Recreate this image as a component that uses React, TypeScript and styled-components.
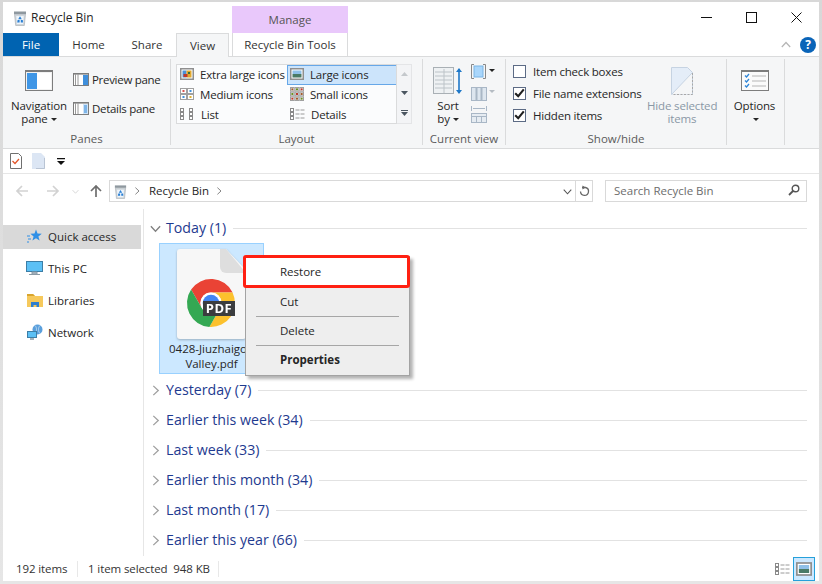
import React from "react";
import styled, {createGlobalStyle} from "styled-components";

const Global = createGlobalStyle`
  html, body { margin: 0; padding: 0; background: #fff; }
  * { box-sizing: border-box; }
  body { font-family: "Open Sans", "Liberation Sans", sans-serif; font-size: 11.5px; color: #262626; }
`;

const Page = styled.div`
  width: 822px;
  height: 584px;
  padding: 2px 3px 3px;
  background: linear-gradient(#d8d8d8, #e6e6e6);
  overflow: hidden;
`;
const Win = styled.div`
  height: 579px;
  background: #fff;
  display: flex;
  flex-direction: column;
`;

/* title bar */
const TitleRow = styled.div`
  height: 31px;
  flex: none;
  display: flex;
  align-items: center;
  padding-left: 9px;
`;
const TitleText = styled.span`
  margin-left: 3px;
  font-size: 12px;
  width: 201px;
`;
const ManageLabel = styled.div`
  align-self: flex-end;
  width: 116px;
  height: 27px;
  background: #e9c8fb;
  color: #555;
  display: flex;
  align-items: center;
  justify-content: center;
`;
const Controls = styled.div`
  margin-left: auto;
  display: flex;
  align-items: center;
  padding-right: 17px;
  gap: 34px;
`;

/* tabs */
const TabRow = styled.div`
  height: 23px;
  flex: none;
  display: flex;
  align-items: stretch;
`;
const FileTab = styled.div`
  width: 56px;
  background: #0063b1;
  color: #fff;
  display: flex;
  align-items: center;
  justify-content: center;
`;
const Tab = styled.div<{$w: number; $active?: boolean}>`
  width: ${p => p.$w}px;
  display: flex;
  align-items: center;
  justify-content: center;
  color: #333;
  ${p => p.$active && `
    background: #f5f6f7;
    border: 1px solid #dadbdc;
    border-bottom: none;
    margin-bottom: -1px;
    position: relative;
    z-index: 1;
  `}
`;
const ToolsTab = styled(Tab)`
  margin-left: 3px;
  border-left: 1px solid #dadbdc;
  border-right: 1px solid #dadbdc;
`;
const TabEnd = styled.div`
  margin-left: auto;
  display: flex;
  align-items: center;
  gap: 9px;
  padding-right: 3px;
`;
const Help = styled.div`
  width: 16px;
  height: 16px;
  border-radius: 50%;
  background: #0a64b8;
  color: #fff;
  font-weight: 700;
  font-size: 12px;
  display: flex;
  align-items: center;
  justify-content: center;
`;

/* ribbon */
const Ribbon = styled.div`
  height: 93px;
  flex: none;
  background: #f5f6f7;
  border-top: 1px solid #dadbdc;
  border-bottom: 1px solid #dadbdc;
  display: flex;
`;
const Group = styled.div<{$w: number}>`
  width: ${p => p.$w}px;
  margin: 2px 0 3px;
  border-right: 1px solid #dadbdc;
  display: flex;
  flex-direction: column;
`;
const GroupBody = styled.div<{$pl: number}>`
  flex: 1;
  display: flex;
  padding-left: ${p => p.$pl}px;
`;
const GroupLabel = styled.div`
  height: 15px;
  line-height: 17px;
  text-align: center;
  color: #5b5b5b;
`;
const BigButton = styled.div<{$w: number; $off?: boolean}>`
  width: ${p => p.$w}px;
  flex: none;
  padding-top: 3px;
  text-align: center;
  line-height: 13px;
  letter-spacing: -0.15px;
  white-space: nowrap;
  color: ${p => (p.$off ? "#8a98a6" : "#262626")};
`;
const BigIcon = styled.div`
  height: 37px;
  display: flex;
  align-items: center;
  justify-content: center;
`;
const SmallCol = styled.div`
  margin-left: 6px;
  padding-top: 12px;
  display: flex;
  flex-direction: column;
  gap: 11px;
`;
const SmallRow = styled.div`
  height: 18px;
  display: flex;
  align-items: center;
  gap: 3px;
  padding-bottom: 2px;
  letter-spacing: -0.3px;
  white-space: nowrap;
`;
const Caret = styled.span`
  display: inline-block;
  margin-left: 3px;
  vertical-align: 2px;
  border-left: 3px solid transparent;
  border-right: 3px solid transparent;
  border-top: 3px solid #262626;
`;
const GalleryWrap = styled.div`
  margin-top: 5px;
  height: 60px;
  display: flex;
`;
const Gallery = styled.div`
  width: 221px;
  background: #fbfcfd;
  border: 1px solid #dadbdc;
  display: grid;
  grid-template-columns: 110px 110px;
  grid-auto-rows: 20px;
  overflow: hidden;
`;
const GalleryItem = styled.div<{$on?: boolean}>`
  display: flex;
  align-items: center;
  padding: 0 0 2px 3px;
  gap: 6px;
  letter-spacing: -0.2px;
  white-space: nowrap;
  background: ${p => (p.$on ? "#cce4fb" : "transparent")};
  box-shadow: ${p => (p.$on ? "inset 0 0 0 1px #66a7e8" : "none")};
`;
const GalleryScroll = styled.div`
  width: 15px;
  background: #f3f4f6;
  border: 1px solid #e4e5e7;
  border-left: none;
  display: flex;
  flex-direction: column;
  align-items: center;
  justify-content: space-around;
`;
const ViewCol = styled.div`
  margin-left: 8px;
  padding-top: 5px;
  display: flex;
  flex-direction: column;
  gap: 4px;
`;
const CheckCol = styled.div`
  width: 134px;
  flex: none;
  padding-top: 1px;
`;
const CheckRow = styled.div`
  height: 22px;
  display: flex;
  align-items: center;
  gap: 7px;
  letter-spacing: -0.2px;
  white-space: nowrap;
`;
const Box = styled.span`
  width: 13px;
  height: 13px;
  background: #fff;
  border: 1px solid #5c6b85;
  display: flex;
  align-items: center;
  justify-content: center;
`;

/* quick access and address */
const Qat = styled.div`
  height: 25px;
  flex: none;
  display: flex;
  align-items: center;
  padding-left: 7px;
  border-bottom: 1px solid #e6e6e6;
`;
const QatGap = styled.span<{$w: number}>`
  width: ${p => p.$w}px;
  flex: none;
`;
const AddressRow = styled.div`
  height: 35px;
  flex: none;
  display: flex;
  align-items: flex-start;
  padding-top: 6px;
`;
const NavButtons = styled.div`
  width: 106px;
  height: 22px;
  flex: none;
  display: flex;
  align-items: center;
  padding-left: 12px;
`;
const AddressBox = styled.div`
  width: 484px;
  height: 22px;
  flex: none;
  border: 1px solid #d9d9d9;
  display: flex;
  align-items: center;
  padding-left: 3px;
`;
const Crumb = styled.span`
  margin: 0 6px 2px 8px;
`;
const AddressEnd = styled.div`
  margin-left: auto;
  height: 100%;
  display: flex;
  align-items: center;
`;
const RefreshSlot = styled.div`
  width: 17px;
  height: 100%;
  margin-left: 3px;
  border-left: 1px solid #d9d9d9;
  display: flex;
  align-items: center;
  justify-content: center;
`;
const SearchBox = styled.div`
  width: 202px;
  height: 22px;
  flex: none;
  margin-left: 12px;
  border: 1px solid #d9d9d9;
  color: #6d6d6d;
  display: flex;
  align-items: center;
  justify-content: space-between;
  padding: 0 6px 2px 8px;
`;

/* body */
const Body = styled.div`
  flex: 1;
  min-height: 0;
  display: flex;
`;
const Sidebar = styled.div`
  width: 141px;
  flex: none;
  padding-top: 16px;
  border-right: 1px solid #e6e6e6;
`;
const NavItem = styled.div<{$on?: boolean}>`
  width: 138px;
  height: 24px;
  margin-bottom: 8px;
  display: flex;
  align-items: center;
  padding: 0 0 2px 23px;
  gap: 5px;
  background: ${p => (p.$on ? "#d9d9d9" : "transparent")};
`;
const NavGlyph = styled.span`
  width: 17px;
  height: 17px;
  display: flex;
  align-items: center;
  justify-content: center;
`;
const Pane = styled.div`
  flex: 1;
  position: relative;
  padding: 4px 12px 0 6px;
`;
const GroupRow = styled.div`
  height: 30px;
  display: flex;
  align-items: center;
  gap: 5px;
`;
const GroupName = styled.span`
  font-size: 14.2px;
  padding-bottom: 2px;
  color: #1e3a8f;
  white-space: nowrap;
`;
const GroupLine = styled.span`
  flex: 1;
  height: 1px;
  margin-left: 2px;
  background: #e2e2e2;
`;
const Tile = styled.div`
  width: 105px;
  height: 131px;
  margin: 0 0 1px 9px;
  background: #cce8ff;
  border: 1px solid #99d1ff;
  display: flex;
  flex-direction: column;
  align-items: center;
  padding-top: 5px;
  overflow: hidden;
`;
const TileIcon = styled.div`
  height: 90px;
  filter: drop-shadow(0 1px 1px rgba(0, 0, 0, 0.25));
`;
const TileName = styled.div`
  width: 103px;
  margin-top: 2px;
  line-height: 15px;
  text-align: center;
  white-space: pre;
`;

/* context menu */
const Menu = styled.div`
  position: absolute;
  left: 101px;
  top: 47px;
  width: 165px;
  height: 120px;
  background: #eeeeee;
  border: 1px solid #a3a3a3;
  box-shadow: 3px 3px 3px rgba(0, 0, 0, 0.3);
`;
const MenuItem = styled.div<{$h: number; $bold?: boolean; $up?: number}>`
  height: ${p => p.$h}px;
  display: flex;
  align-items: center;
  padding: 0 0 ${p => p.$up ?? 0}px 34px;
  font-weight: ${p => (p.$bold ? 700 : 400)};
`;
const RestoreItem = styled(MenuItem)`
  margin: -2px -1px 0 -3px;
  padding-left: 34px;
  background: #fff;
  border: 3px solid #ff2012;
  border-radius: 3px;
`;
const MenuSep = styled.div`
  height: 1px;
  margin: 0 10px;
  background: #a6a6a6;
`;

/* status */
const Status = styled.div`
  height: 25px;
  flex: none;
  display: flex;
  align-items: center;
  padding-left: 13px;
  color: #333;
`;
const StatusCell = styled.span<{$w: number}>`
  width: ${p => p.$w}px;
  height: 16px;
  line-height: 16px;
  flex: none;
  border-right: 1px solid #e8e8e8;
  letter-spacing: -0.1px;
  white-space: pre;
`;
const StatusViews = styled.div`
  margin-left: auto;
  display: flex;
  align-items: center;
  gap: 3px;
  padding-right: 4px;
`;
const ViewToggle = styled.div`
  width: 22px;
  height: 24px;
  background: #cce8ff;
  border: 1px solid #26a0da;
  display: flex;
  align-items: center;
  justify-content: center;
`;

/* icons */
const Recycle = ({s = 16}: {s?: number}) => (
  <svg width={s} height={s} viewBox="0 0 16 16">
    <path d="M2.500 4h11l-1.200 11.500H3.700z" fill="#cfd5da" stroke="#a2a9af" strokeWidth=".6"/>
    <path d="M2 1.500h12V4H2z" fill="#8f989f"/>
    <path d="M4.300 6h7.400l-.6 8H4.900z" fill="#eef5fb"/>
    <path d="M8 6.300l1.800 2.900H6.200zM5.600 10h2v2.600H5.200zM8.800 10h2l.2 2.600H8.800z" fill="#2a7fd4"/>
  </svg>
);

const PaneIcon = ({kind}: {kind: "preview" | "details"}) => (
  <svg width="16" height="13" viewBox="0 0 16 13">
    <rect x=".5" y=".5" width="15" height="12" fill="#fff" stroke="#7d7d7d"/>
    <path d="M0 0h16v1.600H0z" fill="#7d7d7d"/>
    <path d="M5 1v11M2.500 1v11" stroke="#9a9a9a"/>
    <rect x="10" y="2" width="5" height="10" fill={kind === "preview" ? "#3f8fdc" : "#cfe4f8"}/>
    {kind === "details" && <path d="M11 4h3M11 6h3M11 8h3M11 10h3" stroke="#2f86d8"/>}
  </svg>
);

const PhotoIcon = ({w = 14, h = 12}: {w?: number; h?: number}) => (
  <svg width={w} height={h} viewBox="0 0 14 12">
    <rect x=".75" y=".75" width="12.500" height="10.500" fill="#fff" stroke="#8f8f8f" strokeWidth="1.500"/>
    <rect x="2.500" y="2.500" width="9" height="3.500" fill="#8fc0e8"/>
    <rect x="2.500" y="6" width="9" height="3.500" fill="#4a7a66"/>
  </svg>
);

const ExtraIcon = () => (
  <svg width="14" height="12" viewBox="0 0 14 12">
    <rect x=".75" y=".75" width="12.500" height="10.500" fill="#fff" stroke="#8f8f8f" strokeWidth="1.500"/>
    <rect x="2.500" y="2.500" width="4" height="7" fill="#4d8fd6"/>
    <rect x="6.500" y="2.500" width="5" height="7" fill="#e0a82e"/>
    <rect x="3.500" y="6" width="4" height="3" fill="#c0392b"/>
    <rect x="8" y="4" width="2" height="2" fill="#3c6e3c"/>
  </svg>
);

const GridIcon = ({cols, rows, w, h, tint}: {cols: number; rows: number; w: number; h: number; tint: string[]}) => {
  const cw = w / cols;
  const ch = h / rows;
  const cells: React.ReactNode[] = [];
  for (let r = 0; r < rows; r++) {
    for (let c = 0; c < cols; c++) {
      cells.push(
        <rect key={`${r}-${c}`} x={c * cw + .5} y={r * ch + .5} width={cw - 1} height={ch - 1} fill="#fff" stroke="#a0a0a0"/>,
        <rect key={`d${r}-${c}`} x={c * cw + cw / 2 - 1} y={r * ch + ch / 2 - 1} width="2" height="2" fill={tint[(r + c) % tint.length]}/>
      );
    }
  }
  return <svg width={w} height={h} viewBox={`0 0 ${w} ${h}`}>{cells}</svg>;
};

const ListIcon = ({cols}: {cols: number}) => (
  <svg width="15" height="12" viewBox="0 0 15 12">
    {[0, 4, 8].map(y => (
      <g key={y}>
        <rect x=".5" y={y + .5} width="3" height="3" fill="#fff" stroke="#8a8a8a"/>
        {cols === 2
          ? <rect x="9.500" y={y + .5} width="3" height="3" fill="#fff" stroke="#8a8a8a"/>
          : <path d={`M5.500 ${y + 2}h4M10.500 ${y + 2}h4`} stroke="#9a9a9a"/>}
      </g>
    ))}
  </svg>
);

const Check = () => (
  <svg width="11" height="10" viewBox="0 0 11 10">
    <path d="M1.200 5.200l3 3L9.800 1.400" fill="none" stroke="#1f1f1f" strokeWidth="2.100"/>
  </svg>
);

const Chevron = ({dir = "right", c = "#9a9a9a", s = 9}: {dir?: "right" | "down" | "up"; c?: string; s?: number}) => (
  <svg width={s} height={s} viewBox="0 0 10 10">
    <path
      d={dir === "right" ? "M3 .8l4.500 4.200L3 9.200" : dir === "down" ? "M.8 3L5 7.500 9.200 3" : "M.8 7L5 2.500 9.200 7"}
      fill="none"
      stroke={c}
      strokeWidth="1.200"
    />
  </svg>
);

const ArrowSvg = styled.svg<{$rot: number}>`
  transform: rotate(${p => p.$rot}deg);
`;
const Arrow = ({dir, c}: {dir: "left" | "right" | "up"; c: string}) => (
  <ArrowSvg $rot={dir === "left" ? 0 : dir === "right" ? 180 : 90} width="14" height="14" viewBox="0 0 14 14">
    <path d="M13 7H2M7 2L2 7l5 5" fill="none" stroke={c} strokeWidth="1.700"/>
  </ArrowSvg>
);

const PdfIcon = () => (
  <svg width="70" height="90" viewBox="0 0 70 90">
    <path d="M3 0h46l20 21v66a3 3 0 0 1-3 3H3a3 3 0 0 1-3-3V3a3 3 0 0 1 3-3z" fill="#f7f7f7"/>
    <path d="M43 0h6l20 24H49a6 6 0 0 1-6-6z" fill="#dedede"/>
    <g transform="translate(34 54)">
      {["#ea4335", "#fcc12d", "#34a853"].map((c, i) => (
        <path key={c} transform={`rotate(${i * 120})`} d="M21.600-10.500A24 24 0 0 0-19.900-13.400L-9.100 5.250A10.500 10.500 0 0 1 0-10.500Z" fill={c}/>
      ))}
      <circle r="10.500" fill="#fff"/>
      <circle r="8.300" fill="#4285f4"/>
    </g>
    <rect x="26" y="52" width="32" height="15" fill="#3b3d3f"/>
    <text x="42" y="64" textAnchor="middle" fill="#fff" fontSize="13" fontWeight="700" fontFamily="Open Sans, sans-serif" letterSpacing=".6">PDF</text>
  </svg>
);

const groups = [
  "Yesterday (7)",
  "Earlier this week (34)",
  "Last week (33)",
  "Earlier this month (34)",
  "Last month (17)",
  "Earlier this year (66)",
];

export default function App() {
  return (
    <Page>
      <Global/>
      <Win>
        <TitleRow>
          <Recycle/>
          <TitleText>Recycle Bin</TitleText>
          <ManageLabel>Manage</ManageLabel>
          <Controls>
            <svg width="11" height="11" viewBox="0 0 11 11"><path d="M0 5.500h11" stroke="#111"/></svg>
            <svg width="11" height="11" viewBox="0 0 11 11"><rect x=".5" y=".5" width="10" height="10" fill="none" stroke="#111"/></svg>
            <svg width="11" height="11" viewBox="0 0 11 11"><path d="M.5.5l10 10M10.500.5l-10 10" stroke="#111"/></svg>
          </Controls>
        </TitleRow>

        <TabRow>
          <FileTab>File</FileTab>
          <Tab $w={59}>Home</Tab>
          <Tab $w={58}>Share</Tab>
          <Tab $w={53} $active>View</Tab>
          <ToolsTab $w={116}>Recycle Bin Tools</ToolsTab>
          <TabEnd>
            <Chevron dir="up" c="#b5b5b5" s={10}/>
            <Help>?</Help>
          </TabEnd>
        </TabRow>

        <Ribbon>
          <Group $w={168}>
            <GroupBody $pl={8}>
              <BigButton $w={56}>
                <BigIcon>
                  <svg width="28" height="21" viewBox="0 0 28 21">
                    <rect x=".5" y=".5" width="27" height="20" fill="#f2f2f2" stroke="#7d7d7d"/>
                    <path d="M0 0h28v2H0z" fill="#7d7d7d"/>
                    <rect x="2" y="3" width="10" height="16" fill="#3f96e6"/>
                    <rect x="12" y="3" width="14" height="16" fill="#fff"/>
                  </svg>
                </BigIcon>
                Navigation<br/>pane<Caret/>
              </BigButton>
              <SmallCol>
                <SmallRow><PaneIcon kind="preview"/>Preview pane</SmallRow>
                <SmallRow><PaneIcon kind="details"/>Details pane</SmallRow>
              </SmallCol>
            </GroupBody>
            <GroupLabel>Panes</GroupLabel>
          </Group>

          <Group $w={252}>
            <GroupBody $pl={5}>
              <GalleryWrap>
                <Gallery>
                  <GalleryItem><ExtraIcon/>Extra large icons</GalleryItem>
                  <GalleryItem $on><PhotoIcon/>Large icons</GalleryItem>
                  <GalleryItem><GridIcon cols={2} rows={2} w={14} h={12} tint={["#d9534f", "#3f8fdc", "#e0b030"]}/>Medium icons</GalleryItem>
                  <GalleryItem><GridIcon cols={3} rows={3} w={14} h={14} tint={["#a05a2c", "#6b8e23", "#c0392b"]}/>Small icons</GalleryItem>
                  <GalleryItem><ListIcon cols={2}/>List</GalleryItem>
                  <GalleryItem><ListIcon cols={3}/>Details</GalleryItem>
                </Gallery>
                <GalleryScroll>
                  <svg width="7" height="4" viewBox="0 0 7 4"><path d="M3.500 0L7 4H0z" fill="#c4c8cc"/></svg>
                  <svg width="7" height="4" viewBox="0 0 7 4"><path d="M0 0h7L3.500 4z" fill="#4a5560"/></svg>
                  <svg width="7" height="6" viewBox="0 0 7 6"><path d="M0 0h7v1H0zM0 2h7L3.500 6z" fill="#4a5560"/></svg>
                </GalleryScroll>
              </GalleryWrap>
            </GroupBody>
            <GroupLabel>Layout</GroupLabel>
          </Group>

          <Group $w={83}>
            <GroupBody $pl={10}>
              <BigButton $w={30}>
                <BigIcon>
                  <svg width="30" height="28" viewBox="0 0 30 28">
                    <rect x=".5" y=".5" width="20" height="26" fill="#eef1f3" stroke="#a9b0b5"/>
                    <path d="M2 5h17M2 9h17M2 13h17M2 17h17M2 21h17M11 2v24" stroke="#bcc3c8"/>
                    <path d="M26 2v24" stroke="#1f78c8" strokeWidth="1.600"/>
                    <path d="M23 5l3-4 3 4zM23 23l3 4 3-4z" fill="#1f78c8"/>
                  </svg>
                </BigIcon>
                Sort<br/>by<Caret/>
              </BigButton>
              <ViewCol>
                <svg width="24" height="16" viewBox="0 0 24 16">
                  <path d="M3 .5H.5v14H3M12 .5h2.500v14H12" fill="none" stroke="#888"/>
                  <rect x="3" y="2" width="9" height="11" fill="#a9d6fb" stroke="#7ab4e4"/>
                  <path d="M18 5h6l-3 3z" fill="#222"/>
                </svg>
                <svg width="24" height="18" viewBox="0 0 24 18">
                  <rect x=".5" y="3.500" width="15" height="13" fill="#dde6ef" stroke="#a9b7c6"/>
                  <path d="M5.500 3v14M10.500 3v14" stroke="#a9b7c6" strokeWidth="2"/>
                  <path d="M18 6h6l-3 3z" fill="#b5bcc3"/>
                </svg>
                <svg width="18" height="17" viewBox="0 0 18 17">
                  <path d="M.5 0v5M15.500 0v5M2 2.500h12" stroke="#a9b7c6"/>
                  <rect x=".5" y="7.500" width="15" height="9" fill="#e6ecf2" stroke="#a9b7c6"/>
                  <path d="M.5 10.500h15M5.500 10v7M10.500 10v7" stroke="#a9b7c6"/>
                </svg>
              </ViewCol>
            </GroupBody>
            <GroupLabel>Current view</GroupLabel>
          </Group>

          <Group $w={221}>
            <GroupBody $pl={7}>
              <CheckCol>
                <CheckRow><Box/>Item check boxes</CheckRow>
                <CheckRow><Box><Check/></Box>File name extensions</CheckRow>
                <CheckRow><Box><Check/></Box>Hidden items</CheckRow>
              </CheckCol>
              <BigButton $w={70} $off>
                <BigIcon>
                  <svg width="22" height="28" viewBox="0 0 22 28">
                    <path d="M.5.5h16l5 5v22H.5z" fill="#e4edf8" stroke="#c6d3e2"/>
                    <path d="M1 27L21 6v21.500H1z" fill="#f5f6f7"/>
                    <path d="M21.500 6v21.500H1" fill="none" stroke="#a8a8a8" strokeDasharray="2 1.500"/>
                    <path d="M1 27L21 6" stroke="#c6d3e2"/>
                  </svg>
                </BigIcon>
                Hide selected<br/>items
              </BigButton>
            </GroupBody>
            <GroupLabel>Show/hide</GroupLabel>
          </Group>

          <Group $w={58}>
            <GroupBody $pl={0}>
              <BigButton $w={55}>
                <BigIcon>
                  <svg width="28" height="21" viewBox="0 0 28 21">
                    <rect x=".5" y=".5" width="27" height="20" fill="#fbfbfb" stroke="#7d7d7d"/>
                    <path d="M0 0h28v2H0z" fill="#7d7d7d"/>
                    <path d="M11 6h14M11 11h14M11 16h14" stroke="#b5b5b5"/>
                    <path d="M4 5.500l1.500 1.500L8 4M4 10.500l1.500 1.500L8 9M4 15.500l1.500 1.500L8 14" fill="none" stroke="#2f86d8" strokeWidth="1.300"/>
                  </svg>
                </BigIcon>
                Options<br/><Caret/>
              </BigButton>
            </GroupBody>
          </Group>
        </Ribbon>

        <Qat>
          <svg width="12" height="16" viewBox="0 0 12 16">
            <path d="M.5.5h8l3 3v12H.5z" fill="#fff" stroke="#6f6f6f"/>
            <path d="M2.500 8l2.500 2.500L9 6" fill="none" stroke="#e2562a" strokeWidth="1.300"/>
          </svg>
          <QatGap $w={10}/>
          <svg width="13" height="16" viewBox="0 0 13 16">
            <path d="M0 0h9l4 4v12H0z" fill="#dce6f4"/>
            <path d="M12.500 5v10.500H4" fill="none" stroke="#b9c4d4"/>
          </svg>
          <QatGap $w={12}/>
          <svg width="8" height="7" viewBox="0 0 8 7"><path d="M0 0h8v1.200H0zM0 3h8L4 7z" fill="#111"/></svg>
        </Qat>

        <AddressRow>
          <NavButtons>
            <Arrow dir="left" c="#d2d2d2"/>
            <QatGap $w={17}/>
            <Arrow dir="right" c="#d2d2d2"/>
            <QatGap $w={12}/>
            <Chevron dir="down" c="#d2d2d2" s={7}/>
            <QatGap $w={10}/>
            <Arrow dir="up" c="#6e6e6e"/>
          </NavButtons>
          <AddressBox>
            <Recycle s={15}/>
            <QatGap $w={5}/>
            <Chevron c="#808080" s={8}/>
            <Crumb>Recycle Bin</Crumb>
            <Chevron c="#808080" s={8}/>
            <AddressEnd>
              <Chevron dir="down" c="#555" s={9}/>
              <RefreshSlot>
                <svg width="11" height="12" viewBox="0 0 11 12">
                  <path d="M3 2.500h3.500A4 4 0 1 1 1.500 6.500" fill="none" stroke="#666" strokeWidth="1.300"/>
                  <path d="M3.500 .5l3 2-3 2z" fill="#666"/>
                </svg>
              </RefreshSlot>
            </AddressEnd>
          </AddressBox>
          <SearchBox>
            Search Recycle Bin
            <svg width="12" height="12" viewBox="0 0 12 12">
              <circle cx="7.500" cy="4.500" r="3.300" fill="none" stroke="#555" strokeWidth="1.400"/>
              <path d="M5 7L1 11" stroke="#555" strokeWidth="1.800"/>
            </svg>
          </SearchBox>
        </AddressRow>

        <Body>
          <Sidebar>
            <NavItem $on>
              <NavGlyph>
                <svg width="15" height="14" viewBox="0 0 15 14">
                  <path d="M9 .5l1.500 4 4.300.2-3.400 2.700 1.200 4.200L9 9.300l-3.600 2.300 1.200-4.200-3.200-2.700 4.100-.2z" fill="#2f8fe6"/>
                  <path d="M0 7h3M1 10h3M0 13h2" stroke="#2f8fe6"/>
                </svg>
              </NavGlyph>
              Quick access
            </NavItem>
            <NavItem>
              <NavGlyph>
                <svg width="17" height="15" viewBox="0 0 17 15">
                  <rect x=".5" y=".5" width="16" height="10" fill="#5cc0f5" stroke="#3d7ea6"/>
                  <path d="M6 11h5v2H6zM3 13.500h11" stroke="#8a9aa6" fill="#b5c2cc"/>
                </svg>
              </NavGlyph>
              This PC
            </NavItem>
            <NavItem>
              <NavGlyph>
                <svg width="16" height="14" viewBox="0 0 16 14">
                  <path d="M0 1h6l2 2h8v11H0z" fill="#f6c95c"/>
                  <path d="M0 1h6l2 2H0z" fill="#d9a52e"/>
                  <path d="M4 9h8v5h-2.500v-2h-3v2H4z" fill="#2f7fd0"/>
                </svg>
              </NavGlyph>
              Libraries
            </NavItem>
            <NavItem>
              <NavGlyph>
                <svg width="16" height="16" viewBox="0 0 16 16">
                  <circle cx="10.500" cy="5.500" r="5" fill="#5a9fdc"/>
                  <path d="M8 1.500c2 2 2 6 0 8M13 1.500c-2 2-2 6 0 8" fill="none" stroke="#d6e8f7" strokeWidth=".7"/>
                  <rect x=".5" y="7.500" width="9" height="6" fill="#5cc0f5" stroke="#3d7ea6"/>
                  <path d="M3 15h4" stroke="#8a9aa6" strokeWidth="1.500"/>
                </svg>
              </NavGlyph>
              Network
            </NavItem>
          </Sidebar>

          <Pane>
            <GroupRow>
              <Chevron dir="down" c="#808080" s={11}/>
              <GroupName>Today (1)</GroupName>
              <GroupLine/>
            </GroupRow>
            <Tile>
              <TileIcon><PdfIcon/></TileIcon>
              <TileName>{"0428-Jiuzhaigou\nValley.pdf"}</TileName>
            </Tile>
            {groups.map(g => (
              <GroupRow key={g}>
                <Chevron c="#a0a0a0" s={11}/>
                <GroupName>{g}</GroupName>
                <GroupLine/>
              </GroupRow>
            ))}
            <Menu>
              <RestoreItem $h={33}>Restore</RestoreItem>
              <MenuItem $h={28} $up={2}>Cut</MenuItem>
              <MenuSep/>
              <MenuItem $h={28} $up={2}>Delete</MenuItem>
              <MenuSep/>
              <MenuItem $h={27} $bold>Properties</MenuItem>
            </Menu>
          </Pane>
        </Body>

        <Status>
          <StatusCell $w={62}>192 items</StatusCell>
          <QatGap $w={10}/>
          <StatusCell $w={131}>1 item selected  948 KB</StatusCell>
          <StatusViews>
            <ListIcon cols={3}/>
            <ViewToggle><PhotoIcon w={16} h={14}/></ViewToggle>
          </StatusViews>
        </Status>
      </Win>
    </Page>
  );
}
